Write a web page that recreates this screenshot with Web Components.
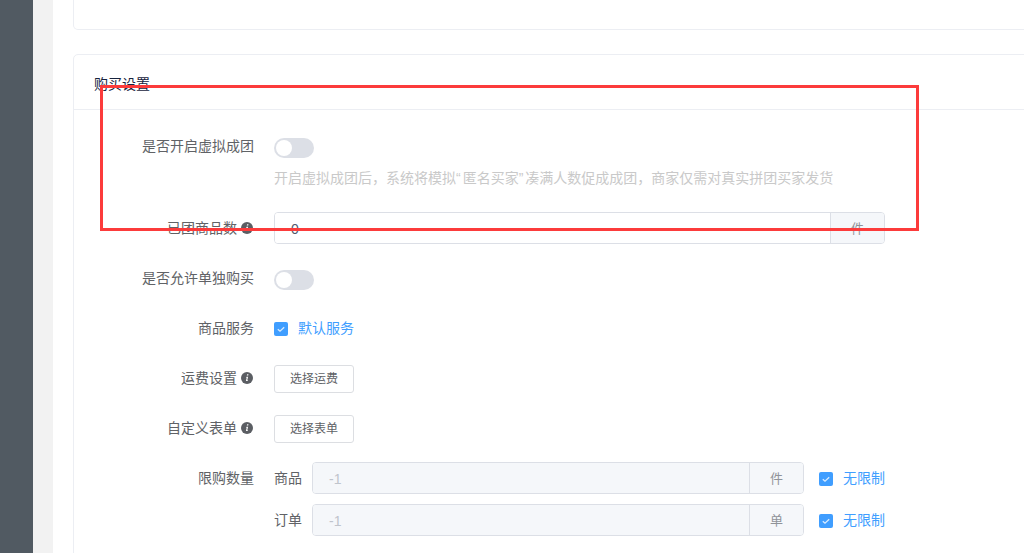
<!DOCTYPE html>
<html lang="zh-CN">
<head>
<meta charset="utf-8">
<title>购买设置</title>
<style>
    html, body { margin: 0; height: 553px; overflow: hidden; background: #fff; }
    body { font: 14px "Liberation Sans", "Noto Sans CJK SC", sans-serif; color: #606266; }
    .stack { display: flex; flex-direction: column; }
</style>
</head>
<body>

<admin-shell>
    <set-card stub></set-card>
    <set-card title="购买设置">
        <form-row label="是否开启虚拟成团" style="--ly: -2px" hint="开启虚拟成团后，系统将模拟“匿名买家”凑满人数促成成团，商家仅需对真实拼团买家发货">
            <ui-switch></ui-switch>
        </form-row>
        <form-row label="已团商品数" info style="--row-top: 24px">
            <addon-input value="0" unit="件" style="--w: 611px"></addon-input>
        </form-row>
        <form-row label="是否允许单独购买" style="--row-top: 20px; --ly: -2px">
            <ui-switch></ui-switch>
        </form-row>
        <form-row label="商品服务" style="--row-top: 16px">
            <ui-check>默认服务</ui-check>
        </form-row>
        <form-row label="运费设置" info style="--row-top: 19px; --ly: -1px">
            <ui-btn>选择运费</ui-btn>
        </form-row>
        <form-row label="自定义表单" info style="--row-top: 18px; --ly: -1px">
            <ui-btn>选择表单</ui-btn>
        </form-row>
        <form-row label="限购数量" style="--row-top: 17px">
            <div class="stack" style="gap: 10px">
                <limit-line name="商品" unit="件"></limit-line>
                <limit-line name="订单" unit="单"></limit-line>
            </div>
        </form-row>
    </set-card>
</admin-shell>

<mark-box></mark-box>

<script>
// small helper, every element just sets its shadow html once
class Base extends HTMLElement {
    constructor() {
        super();
        this.attachShadow({ mode: 'open' });
    }
}

class AdminShell extends Base {
    connectedCallback() {
        this.shadowRoot.innerHTML = `
            <style>
                :host { display: flex; height: 553px; }
                .side { width: 33px; flex: none; background: #515a62; }
                .gutter { width: 20px; flex: none; background: #f2f2f2; }
                main { flex: 1; min-width: 0; background: #fff; padding-left: 20px; overflow: hidden; }
            </style>
            <div class="side"></div>
            <div class="gutter"></div>
            <main><slot></slot></main>
        `;
    }
}

class SetCard extends Base {
    connectedCallback() {
        const title = this.getAttribute('title');
        const stub = this.hasAttribute('stub');
        this.shadowRoot.innerHTML = `
            <style>
                :host { display: block; margin-right: -20px; }
                .card { border: 1px solid #eceef3; border-radius: 5px; background: #fff; }
                .stub { height: 29px; border-top: none; border-radius: 0 0 5px 5px; margin-bottom: 24px; }
                h3 { margin: 0; height: 55px; box-sizing: border-box; padding: 19px 20px 0; border-bottom: 1px solid #eceef3;
                     font-size: 14px; font-weight: 400; line-height: 20px; color: #17233d; }
                .body { padding-top: 22px; min-height: 500px; }
            </style>
            ${stub
                ? '<div class="card stub"></div>'
                : `<div class="card"><h3>${title}</h3><div class="body"><slot></slot></div></div>`}
        `;
    }
}

class FormRow extends Base {
    connectedCallback() {
        const label = this.getAttribute('label');
        // the curly quotes are a bit wider in the reference
        const hint = (this.getAttribute('hint') || '').replace(/[“”]/g, '<span class="q">$&</span>');
        this.shadowRoot.innerHTML = `
            <style>
                :host { display: grid; grid-template-columns: 180px 1fr; column-gap: 20px; margin-top: var(--row-top, 0); }
                .label { display: flex; justify-content: flex-end; align-items: center; height: 32px;
                         margin-top: var(--ly, 0); color: #606266; }
                .label span { padding-bottom: 2px; }
                .control { display: flex; align-items: center; min-height: 32px; }
                .hint { grid-column: 2; margin-top: 4px; line-height: 20px; color: #c9c9c9; white-space: nowrap; }
                .q { letter-spacing: 2px; }
            </style>
            <div class="label"><span>${label}</span>${this.hasAttribute('info') ? '<info-icon></info-icon>' : ''}</div>
            <div class="control"><slot></slot></div>
            ${hint ? `<div class="hint">${hint}</div>` : ''}
        `;
    }
}

class UiSwitch extends Base {
    connectedCallback() {
        this.shadowRoot.innerHTML = `
            <style>
                :host { display: block; width: 40px; height: 20px; border-radius: 10px; background: #dcdfe6; position: relative; }
                i { position: absolute; left: 2px; top: 2px; width: 16px; height: 16px; border-radius: 50%; background: #fff; }
            </style>
            <i></i>
        `;
    }
}

class UiCheck extends Base {
    connectedCallback() {
        this.shadowRoot.innerHTML = `
            <style>
                :host { display: inline-flex; align-items: center; gap: 10px; color: #409eff; white-space: nowrap; }
                svg { display: block; margin-top: 1px; }
                span { padding-bottom: 2px; }
            </style>
            <svg width="14" height="14" viewBox="0 0 14 14">
                <rect width="14" height="14" rx="2" fill="#409eff"/>
                <path d="M3.8 7.2 6 9.2 10.2 5.2" fill="none" stroke="#d9ecff" stroke-width="1.3"/>
            </svg>
            <span><slot></slot></span>
        `;
    }
}

class UiBtn extends Base {
    connectedCallback() {
        this.shadowRoot.innerHTML = `
            <style>
                :host { display: block; box-sizing: border-box; width: 80px; height: 28px; border: 1px solid #dcdee2;
                        border-radius: 3px; background: #fff; color: #606266; font-size: 12px; line-height: 26px; text-align: center; }
            </style>
            <slot></slot>
        `;
    }
}

class AddonInput extends Base {
    connectedCallback() {
        const disabled = this.hasAttribute('disabled');
        this.shadowRoot.innerHTML = `
            <style>
                :host { display: flex; box-sizing: border-box; width: var(--w); height: 32px; border: 1px solid #dcdfe6;
                        border-radius: 4px; overflow: hidden; background: #fff; }
                .val { flex: 1; padding-left: 16px; line-height: 32px; font-size: 14px; color: ${disabled ? '#c0c4cc' : '#515a6e'};
                       background: ${disabled ? '#f5f7fa' : '#fff'}; }
                .unit { width: 54px; flex: none; box-sizing: border-box; border-left: 1px solid #dcdfe6; background: #f5f7fa;
                        color: #909399; font-size: 13px; line-height: 32px; text-align: center; }
            </style>
            <div class="val">${this.getAttribute('value')}</div>
            <div class="unit">${this.getAttribute('unit')}</div>
        `;
    }
}

class LimitLine extends Base {
    connectedCallback() {
        this.shadowRoot.innerHTML = `
            <style>
                :host { display: flex; align-items: center; color: #606266; }
                .name { width: 38px; flex: none; padding-bottom: 2px; }
                ui-check { margin-left: 15px; }
            </style>
            <span class="name">${this.getAttribute('name')}</span>
            <addon-input disabled value="-1" unit="${this.getAttribute('unit')}" style="--w: 492px"></addon-input>
            <ui-check>无限制</ui-check>
        `;
    }
}

class InfoIcon extends Base {
    connectedCallback() {
        this.shadowRoot.innerHTML = `
            <style>
                :host { display: block; width: 12px; height: 12px; margin: 0 1px 0 4px; }
                svg { display: block; }
            </style>
            <svg width="12" height="12" viewBox="0 0 12 12">
                <circle cx="6" cy="6" r="6" fill="#5b5e63"/>
                <path d="M6.1 2.3h1.4l-.3 1.3H5.8zM5.6 4.8h1.5l-.8 3.4h.7l-.2.9H4.9l.8-3.4h-.7z" fill="#fff"/>
            </svg>
        `;
    }
}

// red box drawn over the screenshot
class MarkBox extends Base {
    connectedCallback() {
        this.shadowRoot.innerHTML = `
            <style>
                :host { position: absolute; left: 100px; top: 85px; width: 819px; height: 146px; box-sizing: border-box;
                        border: 3px solid #fc3b3b; pointer-events: none; }
            </style>
        `;
    }
}

customElements.define('admin-shell', AdminShell);
customElements.define('set-card', SetCard);
customElements.define('form-row', FormRow);
customElements.define('ui-switch', UiSwitch);
customElements.define('ui-check', UiCheck);
customElements.define('ui-btn', UiBtn);
customElements.define('addon-input', AddonInput);
customElements.define('limit-line', LimitLine);
customElements.define('info-icon', InfoIcon);
customElements.define('mark-box', MarkBox);
</script>
</body>
</html>
